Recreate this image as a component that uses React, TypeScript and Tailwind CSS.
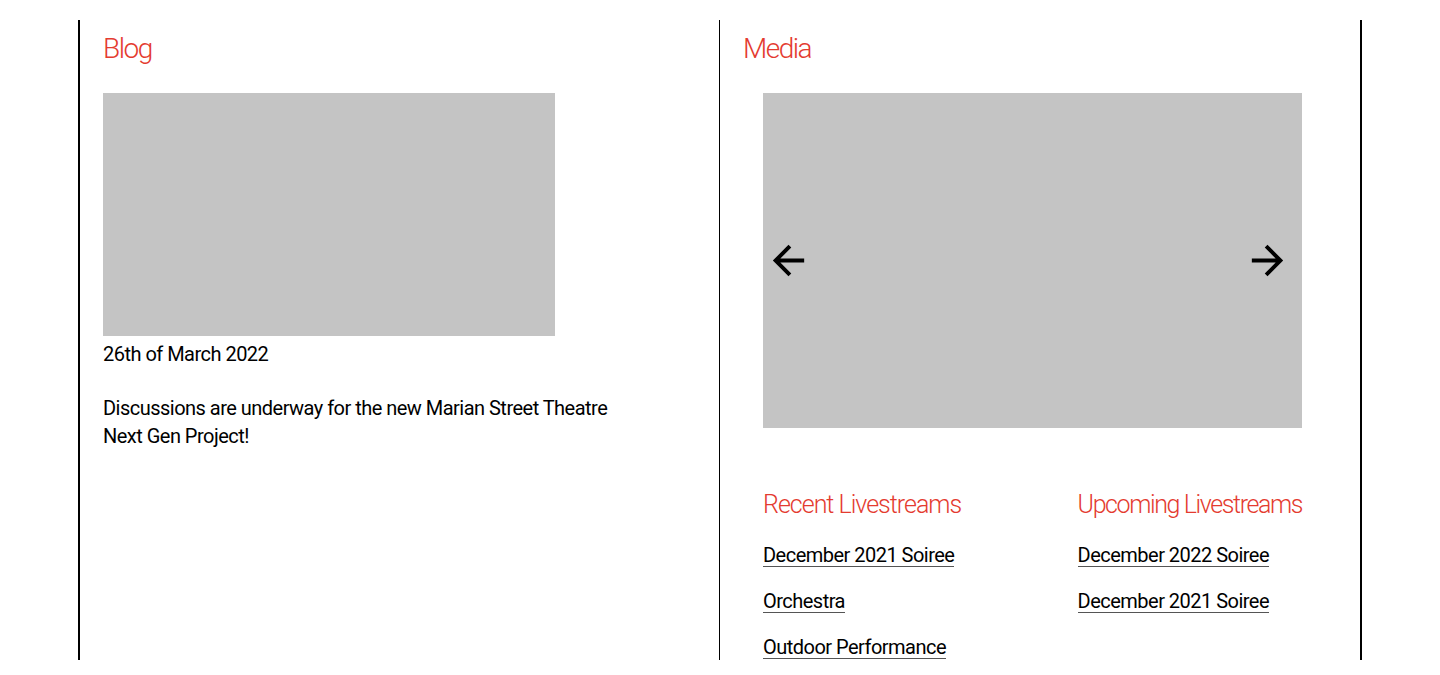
import React from "react";
import { MdArrowBack, MdArrowForward } from "react-icons/md";

const F = { fontFamily: 'Roboto, "DejaVu Sans Condensed", sans-serif' };

function LinkItem({ children }: { children: React.ReactNode }) {
  return (
    <a href="#" className="inline-block text-[20px] leading-[22px] tracking-[-0.52px] text-black border-b border-[#555]">
      {children}
    </a>
  );
}

export default function App() {
  return (
    <div className="bg-white min-h-[675px] pt-5" style={F}>
      <div className="mx-auto w-[1284px] h-[640px] flex border-l-2 border-r-2 border-black">
        <div className="w-[640px] border-r border-black pl-[23px] pt-[9px]">
          <h2 className="text-[28px] leading-[40px] font-light tracking-[-1.5px] text-[#e43b30]">Blog</h2>
          <div className="mt-[24px] w-[452px] h-[243px] bg-[#c4c4c4]" />
          <p className="mt-[4px] text-[20px] leading-[28px] tracking-[-0.52px] text-black">26th of March 2022</p>
          <p className="mt-[26px] w-[520px] text-[20px] leading-[28px] tracking-[-0.52px] text-black">
            Discussions are underway for the new Marian Street Theatre Next Gen Project!
          </p>
        </div>
        <div className="flex-1 pl-[23px] pt-[9px]">
          <h2 className="text-[28px] leading-[40px] font-light tracking-[-1.5px] text-[#e43b30]">Media</h2>
          <div className="ml-5 mt-[24px] w-[539px]">
            <div className="relative h-[335px] bg-[#c4c4c4]">
              <MdArrowBack className="absolute left-[2px] top-[144px] text-black" size={47} />
              <MdArrowForward className="absolute right-[11px] top-[144px] text-black" size={47} />
            </div>
            <div className="mt-[60px] flex justify-between">
              <div>
                <h3 className="text-[25px] leading-[34px] font-light tracking-[-1px] text-[#e43b30]">Recent Livestreams</h3>
                <ul className="mt-[22px] flex flex-col gap-[21px]">
                  <li><LinkItem>December 2021 Soiree</LinkItem></li>
                  <li><LinkItem>Orchestra</LinkItem></li>
                  <li><LinkItem>Outdoor Performance</LinkItem></li>
                </ul>
              </div>
              <div>
                <h3 className="text-[25px] leading-[34px] font-light tracking-[-1.4px] text-[#e43b30]">Upcoming Livestreams</h3>
                <ul className="mt-[22px] flex flex-col gap-[21px]">
                  <li><LinkItem>December 2022 Soiree</LinkItem></li>
                  <li><LinkItem>December 2021 Soiree</LinkItem></li>
                </ul>
              </div>
            </div>
          </div>
        </div>
      </div>
    </div>
  );
}
